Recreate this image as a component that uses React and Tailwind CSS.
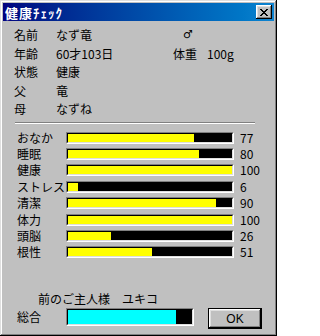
import React from 'react';

const stats = [
	{ label: 'おなか', value: 77 },
	{ label: '睡眠', value: 80 },
	{ label: '健康', value: 100 },
	{ label: 'ストレス', value: 6 },
	{ label: '清潔', value: 90 },
	{ label: '体力', value: 100 },
	{ label: '頭脳', value: 26 },
	{ label: '根性', value: 51 },
];

// sunken meter, win98 style
const Meter = ({ value, color, className }) => (
	<div className={`border-t border-l border-t-[#808080] border-l-[#808080] border-b border-r border-b-white border-r-white ${className}`}>
		<div className="w-full h-full border-t border-l border-t-black border-l-black border-b border-r border-b-[#dfdfdf] border-r-[#dfdfdf] bg-black">
			<div className={`h-full ${color}`} style={{ width: `${value}%` }} />
		</div>
	</div>
);

const CloseIcon = () => (
	<svg width="8" height="7" viewBox="0 0 8 7" shapeRendering="crispEdges">
		<path
			fill="#000"
			d="M0 0h2v1H0z M6 0h2v1H6z M1 1h2v1H1z M5 1h2v1H5z M2 2h4v1H2z M3 3h2v1H3z M2 4h4v1H2z M1 5h2v1H1z M5 5h2v1H5z M0 6h2v1H0z M6 6h2v1H6z"
		/>
	</svg>
);

const App = () => {
	return (
		<div className="w-[277px] h-[336px] bg-[#c0c0c0] p-[3px] flex flex-col text-[12px] leading-[12px] text-black font-['Noto_Sans_CJK_JP',sans-serif] shadow-[inset_-1px_-1px_#000,inset_1px_1px_#dfdfdf,inset_-2px_-2px_#808080,inset_2px_2px_#fff]">
			{/* title bar */}
			<div className="h-[18px] flex items-center justify-between pl-[2px] pr-[2px] bg-linear-to-r from-[#000080] to-[#1084d0]">
				<span className="text-white font-bold text-[13px] leading-[13px] tracking-[1px]">健康ﾁｪｯｸ</span>
				<div className="w-[16px] h-[14px] bg-[#c0c0c0] flex items-center justify-center shadow-[inset_-1px_-1px_#000,inset_1px_1px_#fff,inset_-2px_-2px_#808080,inset_2px_2px_#dfdfdf]">
					<CloseIcon />
				</div>
			</div>

			{/* profile */}
			<div className="pt-[5px] pl-[11px] flex flex-col">
				<div className="h-[18.5px] flex items-center">
					<span className="w-[42px]">名前</span>
					<span className="w-[127px]">なず竜</span>
					<span className="font-['DejaVu_Sans',sans-serif] text-[11px]">♂</span>
				</div>
				<div className="h-[18.5px] flex items-center">
					<span className="w-[42px]">年齢</span>
					<span className="w-[117px]">60才103日</span>
					<span className="w-[34px]">体重</span>
					<span>100g</span>
				</div>
				<div className="h-[18.5px] flex items-center">
					<span className="w-[42px]">状態</span>
					<span>健康</span>
				</div>
				<div className="h-[18.5px] flex items-center">
					<span className="w-[42px]">父</span>
					<span>竜</span>
				</div>
				<div className="h-[18.5px] flex items-center">
					<span className="w-[42px]">母</span>
					<span>なずね</span>
				</div>
			</div>

			{/* etched separator */}
			<div className="mt-[3px] ml-[12px] w-[240px] border-t border-t-[#808080] border-b border-b-white" />

			{/* stats */}
			<div className="mt-[8px] pl-[14px] flex flex-col gap-[4.43px]">
				{stats.map((s) => (
					<div key={s.label} className="h-[12px] flex items-center">
						<span className="w-[49px] whitespace-nowrap">{s.label}</span>
						<Meter value={s.value} color="bg-[#ffff00]" className="w-[168px] h-[12px]" />
						<span className="ml-[6px]">{s.value}</span>
					</div>
				))}
			</div>

			{/* previous owner */}
			<div className="mt-[35px] pl-[35px] flex">
				<span>前のご主人様</span>
				<span className="ml-[12px]">ユキコ</span>
			</div>

			<div className="mt-[3px] pl-[14px] flex items-start">
				<span className="w-[49px] h-[18px] flex items-center">総合</span>
				<Meter value={87} color="bg-[#00ffff]" className="w-[128px] h-[18px]" />
				<button className="ml-[14px] w-[54px] h-[21px] bg-[#c0c0c0] border border-black flex items-center justify-center shadow-[inset_-1px_-1px_#000,inset_1px_1px_#fff,inset_-2px_-2px_#808080,inset_2px_2px_#dfdfdf] font-['Liberation_Sans',sans-serif] text-[12px]">
					OK
				</button>
			</div>
		</div>
	);
};

export default App;
